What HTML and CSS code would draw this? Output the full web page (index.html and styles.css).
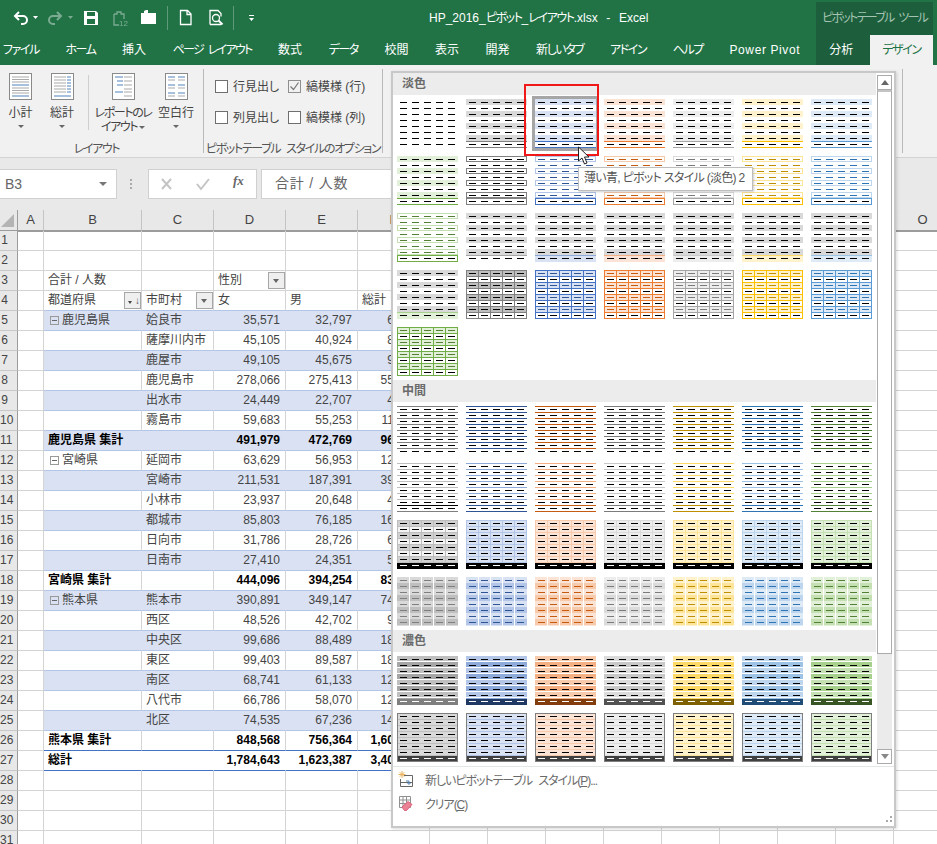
FILE: index.html
```html
<!DOCTYPE html>
<html lang="ja">
<head>
    <meta charset="utf-8">
    <title>HP_2016_ピボット_レイアウト.xlsx - Excel</title>
    <link rel="stylesheet" href="styles.css">
</head>
<body>
    <!-- Title bar -->
    <div class="titlebar">
        <svg class="qat" width="429" height="33" viewBox="0 0 429 33">
            <path class="st" d="M19 12l-4 4 4 4M15 16h8a4 4 0 0 1 0 8h-2"/>
            <path class="tri" d="M33 16h5l-2.500 3z"/>
            <g class="dim">
                <path class="st" d="M57 12l4 4-4 4M61 16h-8a4 4 0 0 0 0 8h2"/>
                <path class="tri" d="M68 16h5l-2.500 3z"/>
            </g>
            <path class="solid" d="M84 11h12l2 2v12H84z"/>
            <path class="cut" d="M87 12h8v4h-8zM87 19h8v5h-8z"/>
            <g class="dim">
                <path class="thin" d="M114 14h3v-2h4v2h3v5M114 14v11h5"/>
                <text class="n12" x="119" y="26">12</text>
            </g>
            <path class="solid" d="M141 13h3v-2l2-1h2v3h8v11h-15z"/>
            <line class="sep" x1="167.500" y1="6" x2="167.500" y2="30"/>
            <path class="thin" d="M180.500 10.500h7l3.500 3.500v10.500h-10.500zM187 10.500v4h4"/>
            <path class="thin" d="M210 24.500v-14h8l3 3v3M210 24.500h11"/>
            <circle class="thin" cx="216" cy="18" r="3.500"/>
            <path class="st" d="M218.500 20.500l4 4"/>
            <line class="sep" x1="233.500" y1="6" x2="233.500" y2="30"/>
            <path class="solid" d="M249 15h5v1h-5zM249 18h5l-2.500 3z"/>
        </svg>
        <div class="doc-title">HP_2016_<span class="kana">ピボット</span>_<span class="kana">レイアウト</span>.xlsx &nbsp;-&nbsp; Excel</div>
        <div class="ctx-title">ピボットテーブル ツール</div>
    </div>

    <!-- Ribbon tabs -->
    <div class="tabs">
        <span class="tab kana">ファイル</span>
        <span class="tab kana">ホーム</span>
        <span class="tab">挿入</span>
        <span class="tab spaced">ページ レイアウト</span>
        <span class="tab">数式</span>
        <span class="tab kana">データ</span>
        <span class="tab">校閲</span>
        <span class="tab">表示</span>
        <span class="tab">開発</span>
        <span class="tab kana">新しいタブ</span>
        <span class="tab kana">アドイン</span>
        <span class="tab kana">ヘルプ</span>
        <span class="tab latin">Power Pivot</span>
        <div class="ctx-tabs">
            <span class="tab ctx-tab">分析</span>
            <span class="tab active-tab kana">デザイン</span>
        </div>
    </div>

    <!-- Ribbon -->
    <div class="ribbon">
        <div class="group group-layout">
            <div class="group-body">
                <div class="bigbtn w41">
                    <svg class="ricon" width="23" height="27" viewBox="0 0 23 27">
                        <rect class="frame" x=".5" y=".5" width="22" height="26"/>
                        <path class="g" d="M3 4h17M3 6.500h17M3 9h17"/>
                        <path class="b" d="M3 12h17"/>
                        <path class="g" d="M3 15h17M3 17.500h17M3 20h17"/>
                        <path class="b" d="M3 23h17"/>
                    </svg>
                    <span class="biglabel">小計</span>
                    <span class="caret"></span>
                </div>
                <div class="bigbtn w42">
                    <svg class="ricon" width="23" height="27" viewBox="0 0 23 27">
                        <rect class="frame" x=".5" y=".5" width="22" height="26"/>
                        <path class="g" d="M3 4h12M3 7h12M3 10h12M3 13h12M3 16h12M3 19h12"/>
                        <path class="b" d="M16 4h4M16 7h4M16 10h4M16 13h4M16 16h4M16 19h4M3 23h17"/>
                    </svg>
                    <span class="biglabel">総計</span>
                    <span class="caret"></span>
                </div>
                <div class="vsep"></div>
                <div class="bigbtn w60">
                    <svg class="ricon" width="23" height="27" viewBox="0 0 23 27">
                        <rect class="frame" x=".5" y=".5" width="22" height="26"/>
                        <path class="b" d="M3 4h8M5 8h6M5 12h6M3 19h8"/>
                        <path class="g" d="M12 4h8M12 8h8M12 12h8M12 16h8M12 19h8M12 23h8"/>
                    </svg>
                    <span class="biglabel kana">レポートのレ<br>イアウト <i class="caret inline"></i></span>
                </div>
                <div class="bigbtn w46">
                    <svg class="ricon" width="23" height="27" viewBox="0 0 23 27">
                        <rect class="frame" x=".5" y=".5" width="22" height="26"/>
                        <path class="b" d="M3 4h7M13 4h7M3 12h7M13 12h7M3 20h7M13 20h7"/>
                        <path class="g" d="M3 7h7M13 7h7M3 15h7M13 15h7M3 23h7M13 23h7"/>
                    </svg>
                    <span class="biglabel">空白行</span>
                    <span class="caret"></span>
                </div>
            </div>
            <div class="group-label kana">レイアウト</div>
        </div>
        <div class="group group-options">
            <div class="checks">
                <label class="check"><span class="box"></span>行見出し</label>
                <label class="check"><span class="box checked">
                    <svg width="11" height="11" viewBox="0 0 11 11"><path d="M1.500 5.500l3 3 5-7"/></svg>
                </span>縞模様 (行)</label>
                <label class="check"><span class="box"></span>列見出し</label>
                <label class="check"><span class="box"></span>縞模様 (列)</label>
            </div>
            <div class="group-label">ピボットテーブル スタイルのオプション</div>
        </div>
        <div class="group group-styles"></div>
    </div>

    <!-- Formula bar -->
    <div class="formula">
        <div class="namebox"><span>B3</span><span class="nb-arrow"></span></div>
        <div class="dots"></div>
        <div class="fx-buttons">
            <svg width="109" height="28" viewBox="0 0 109 28">
                <path class="fx-x" d="M13 9l9 10M22 9l-9 10"/>
                <path class="fx-ok" d="M48 14l4 5 8-10"/>
            </svg>
            <span class="fx-label">fx</span>
        </div>
        <div class="fx-input">合計 / 人数</div>
    </div>

    <!-- Sheet -->
    <div class="sheet">
        <div class="row head">
            <span class="num corner"><svg width="17" height="20" viewBox="0 0 17 20"><path d="M14 4v13H1z"/></svg></span>
            <span class="colh">A</span><span class="colh">B</span><span class="colh">C</span><span class="colh">D</span><span class="colh">E</span><span class="colh">F</span>
            <span class="colh-rest">
                <span class="colh">G</span><span class="colh">H</span><span class="colh">I</span><span class="colh">J</span><span class="colh">K</span><span class="colh">L</span><span class="colh">M</span><span class="colh">N</span><span class="colh">O</span>
            </span>
        </div>
        <div class="row"><span class="num">1</span><span class="cell"></span><span class="cell"></span><span class="cell"></span><span class="cell"></span><span class="cell"></span><span class="cell"></span><span class="rest"></span></div>
        <div class="row"><span class="num">2</span><span class="cell"></span><span class="cell"></span><span class="cell"></span><span class="cell"></span><span class="cell"></span><span class="cell"></span><span class="rest"></span></div>
        <div class="row"><span class="num">3</span><span class="cell"></span><span class="cell">合計 / 人数</span><span class="cell"></span><span class="cell split">性別<span class="drop"></span></span><span class="cell"></span><span class="cell"></span><span class="rest"></span></div>
        <div class="row hdr"><span class="num">4</span><span class="cell"></span><span class="cell p split">都道府県<span class="drop sorted">↓</span></span><span class="cell p split">市町村<span class="drop"></span></span><span class="cell p">女</span><span class="cell p">男</span><span class="cell p">総計</span><span class="rest"></span></div>
        <div class="row band"><span class="num">5</span><span class="cell"></span><span class="cell p"><i class="minus"></i>鹿児島県</span><span class="cell p">姶良市</span><span class="cell p v">35,571</span><span class="cell p v">32,797</span><span class="cell p v">68,368</span><span class="rest"></span></div>
        <div class="row"><span class="num">6</span><span class="cell"></span><span class="cell p"></span><span class="cell p">薩摩川内市</span><span class="cell p v">45,105</span><span class="cell p v">40,924</span><span class="cell p v">86,029</span><span class="rest"></span></div>
        <div class="row band"><span class="num">7</span><span class="cell"></span><span class="cell p"></span><span class="cell p">鹿屋市</span><span class="cell p v">49,105</span><span class="cell p v">45,675</span><span class="cell p v">94,780</span><span class="rest"></span></div>
        <div class="row"><span class="num">8</span><span class="cell"></span><span class="cell p"></span><span class="cell p">鹿児島市</span><span class="cell p v">278,066</span><span class="cell p v">275,413</span><span class="cell p v">553,479</span><span class="rest"></span></div>
        <div class="row band"><span class="num">9</span><span class="cell"></span><span class="cell p"></span><span class="cell p">出水市</span><span class="cell p v">24,449</span><span class="cell p v">22,707</span><span class="cell p v">47,156</span><span class="rest"></span></div>
        <div class="row"><span class="num">10</span><span class="cell"></span><span class="cell p"></span><span class="cell p">霧島市</span><span class="cell p v">59,683</span><span class="cell p v">55,253</span><span class="cell p v">114,936</span><span class="rest"></span></div>
        <div class="row band total"><span class="num">11</span><span class="cell"></span><span class="cell p">鹿児島県 集計</span><span class="cell p"></span><span class="cell p v">491,979</span><span class="cell p v">472,769</span><span class="cell p v">964,748</span><span class="rest"></span></div>
        <div class="row"><span class="num">12</span><span class="cell"></span><span class="cell p"><i class="minus"></i>宮崎県</span><span class="cell p">延岡市</span><span class="cell p v">63,629</span><span class="cell p v">56,953</span><span class="cell p v">120,582</span><span class="rest"></span></div>
        <div class="row band"><span class="num">13</span><span class="cell"></span><span class="cell p"></span><span class="cell p">宮崎市</span><span class="cell p v">211,531</span><span class="cell p v">187,391</span><span class="cell p v">398,922</span><span class="rest"></span></div>
        <div class="row"><span class="num">14</span><span class="cell"></span><span class="cell p"></span><span class="cell p">小林市</span><span class="cell p v">23,937</span><span class="cell p v">20,648</span><span class="cell p v">44,585</span><span class="rest"></span></div>
        <div class="row band"><span class="num">15</span><span class="cell"></span><span class="cell p"></span><span class="cell p">都城市</span><span class="cell p v">85,803</span><span class="cell p v">76,185</span><span class="cell p v">161,988</span><span class="rest"></span></div>
        <div class="row"><span class="num">16</span><span class="cell"></span><span class="cell p"></span><span class="cell p">日向市</span><span class="cell p v">31,786</span><span class="cell p v">28,726</span><span class="cell p v">60,512</span><span class="rest"></span></div>
        <div class="row band"><span class="num">17</span><span class="cell"></span><span class="cell p"></span><span class="cell p">日南市</span><span class="cell p v">27,410</span><span class="cell p v">24,351</span><span class="cell p v">51,761</span><span class="rest"></span></div>
        <div class="row total"><span class="num">18</span><span class="cell"></span><span class="cell p">宮崎県 集計</span><span class="cell p"></span><span class="cell p v">444,096</span><span class="cell p v">394,254</span><span class="cell p v">838,350</span><span class="rest"></span></div>
        <div class="row band"><span class="num">19</span><span class="cell"></span><span class="cell p"><i class="minus"></i>熊本県</span><span class="cell p">熊本市</span><span class="cell p v">390,891</span><span class="cell p v">349,147</span><span class="cell p v">740,038</span><span class="rest"></span></div>
        <div class="row"><span class="num">20</span><span class="cell"></span><span class="cell p"></span><span class="cell p">西区</span><span class="cell p v">48,526</span><span class="cell p v">42,702</span><span class="cell p v">91,228</span><span class="rest"></span></div>
        <div class="row band"><span class="num">21</span><span class="cell"></span><span class="cell p"></span><span class="cell p">中央区</span><span class="cell p v">99,686</span><span class="cell p v">88,489</span><span class="cell p v">188,175</span><span class="rest"></span></div>
        <div class="row"><span class="num">22</span><span class="cell"></span><span class="cell p"></span><span class="cell p">東区</span><span class="cell p v">99,403</span><span class="cell p v">89,587</span><span class="cell p v">188,990</span><span class="rest"></span></div>
        <div class="row band"><span class="num">23</span><span class="cell"></span><span class="cell p"></span><span class="cell p">南区</span><span class="cell p v">68,741</span><span class="cell p v">61,133</span><span class="cell p v">129,874</span><span class="rest"></span></div>
        <div class="row"><span class="num">24</span><span class="cell"></span><span class="cell p"></span><span class="cell p">八代市</span><span class="cell p v">66,786</span><span class="cell p v">58,070</span><span class="cell p v">124,856</span><span class="rest"></span></div>
        <div class="row band"><span class="num">25</span><span class="cell"></span><span class="cell p"></span><span class="cell p">北区</span><span class="cell p v">74,535</span><span class="cell p v">67,236</span><span class="cell p v">141,771</span><span class="rest"></span></div>
        <div class="row total pre-grand"><span class="num">26</span><span class="cell"></span><span class="cell p">熊本県 集計</span><span class="cell p"></span><span class="cell p v">848,568</span><span class="cell p v">756,364</span><span class="cell p v">1,604,932</span><span class="rest"></span></div>
        <div class="row total grand"><span class="num">27</span><span class="cell"></span><span class="cell p">総計</span><span class="cell p"></span><span class="cell p v">1,784,643</span><span class="cell p v">1,623,387</span><span class="cell p v">3,408,030</span><span class="rest"></span></div>
        <div class="row"><span class="num">28</span><span class="cell"></span><span class="cell"></span><span class="cell"></span><span class="cell"></span><span class="cell"></span><span class="cell"></span><span class="rest"></span></div>
        <div class="row"><span class="num">29</span><span class="cell"></span><span class="cell"></span><span class="cell"></span><span class="cell"></span><span class="cell"></span><span class="cell"></span><span class="rest"></span></div>
        <div class="row"><span class="num">30</span><span class="cell"></span><span class="cell"></span><span class="cell"></span><span class="cell"></span><span class="cell"></span><span class="cell"></span><span class="rest"></span></div>
        <div class="row"><span class="num">31</span><span class="cell"></span><span class="cell"></span><span class="cell"></span><span class="cell"></span><span class="cell"></span><span class="cell"></span><span class="rest"></span></div>
    </div>

    <!-- Style gallery dropdown -->
    <div class="panel">
        <div class="panel-main">
            <div class="gallery">
                <div class="section">淡色</div>
                <div class="thumbs">
                    <div class="thumb"></div>
                    <div class="thumb band black"></div>
                    <div class="thumb band blue selected"></div>
                    <div class="thumb band orange"></div>
                    <div class="thumb band gray"></div>
                    <div class="thumb band gold"></div>
                    <div class="thumb band sky"></div>

                    <div class="thumb band green"></div>
                    <div class="thumb outlined black"></div>
                    <div class="thumb outlined blue"></div>
                    <div class="thumb outlined orange"></div>
                    <div class="thumb outlined gray"></div>
                    <div class="thumb outlined gold"></div>
                    <div class="thumb outlined sky"></div>

                    <div class="thumb outlined green"></div>
                    <div class="thumb stripe black"></div>
                    <div class="thumb stripe blue"></div>
                    <div class="thumb stripe orange"></div>
                    <div class="thumb stripe gray"></div>
                    <div class="thumb stripe gold"></div>
                    <div class="thumb stripe sky"></div>

                    <div class="thumb stripe green"></div>
                    <div class="thumb grid black"></div>
                    <div class="thumb grid blue"></div>
                    <div class="thumb grid orange"></div>
                    <div class="thumb grid gray"></div>
                    <div class="thumb grid gold"></div>
                    <div class="thumb grid sky"></div>

                    <div class="thumb grid green"></div>
                </div>
                <div class="section">中間</div>
                <div class="thumbs">
                    <div class="thumb rule black"></div>
                    <div class="thumb rule blue"></div>
                    <div class="thumb rule orange"></div>
                    <div class="thumb rule gray"></div>
                    <div class="thumb rule gold"></div>
                    <div class="thumb rule sky"></div>
                    <div class="thumb rule green"></div>

                    <div class="thumb rule2 black"></div>
                    <div class="thumb rule2 blue"></div>
                    <div class="thumb rule2 orange"></div>
                    <div class="thumb rule2 gray"></div>
                    <div class="thumb rule2 gold"></div>
                    <div class="thumb rule2 sky"></div>
                    <div class="thumb rule2 green"></div>

                    <div class="thumb medgrid black"></div>
                    <div class="thumb medgrid blue"></div>
                    <div class="thumb medgrid orange"></div>
                    <div class="thumb medgrid gray"></div>
                    <div class="thumb medgrid gold"></div>
                    <div class="thumb medgrid sky"></div>
                    <div class="thumb medgrid green"></div>

                    <div class="thumb medband black"></div>
                    <div class="thumb medband blue"></div>
                    <div class="thumb medband orange"></div>
                    <div class="thumb medband gray"></div>
                    <div class="thumb medband gold"></div>
                    <div class="thumb medband sky"></div>
                    <div class="thumb medband green"></div>
                </div>
                <div class="section">濃色</div>
                <div class="thumbs">
                    <div class="thumb darkband black"></div>
                    <div class="thumb darkband blue"></div>
                    <div class="thumb darkband orange"></div>
                    <div class="thumb darkband gray"></div>
                    <div class="thumb darkband gold"></div>
                    <div class="thumb darkband sky"></div>
                    <div class="thumb darkband green"></div>

                    <div class="thumb darkbox black"></div>
                    <div class="thumb darkbox blue"></div>
                    <div class="thumb darkbox orange"></div>
                    <div class="thumb darkbox gray"></div>
                    <div class="thumb darkbox gold"></div>
                    <div class="thumb darkbox sky"></div>
                    <div class="thumb darkbox green"></div>
                </div>
            </div>
            <div class="scroll">
                <div class="sb-btn sb-up"></div>
                <div class="sb-thumb"></div>
                <div class="sb-track"></div>
                <div class="sb-btn sb-down"></div>
            </div>
        </div>
        <div class="panel-menu">
            <div class="menu-item">
                <svg width="16" height="18" viewBox="0 0 16 18">
                    <path class="spark" d="M4 1v7M.5 4.500h7M1.800 2.300l4.400 4.400M6.200 2.300L1.800 6.700"/>
                    <path class="tbl" d="M6 5.500h8.500v11H2.500V9M2.500 12.500h12"/>
                    <path class="arr" d="M8 11h3M11 11v3M9.500 13l1.500 1.500L12.500 13"/>
                </svg>
                <span class="menu-text">新しいピボットテーブル スタイル(<u>P</u>)...</span>
            </div>
            <div class="menu-item">
                <svg width="16" height="18" viewBox="0 0 16 18">
                    <path class="tbl2" d="M1.500 2.500h11v11h-11zM1.500 6h11M1.500 9.500h11M5 2.500v11M8.500 2.500v11"/>
                    <path class="eraser" d="M4 13l6-5.500 4 3-5.500 6h-2z"/>
                </svg>
                <span class="menu-text">クリア(<u>C</u>)</span>
            </div>
            <div class="grip"></div>
        </div>
    </div>

    <!-- Things on top of the gallery -->
    <div class="redbox"></div>
    <svg class="cursor" width="14" height="20" viewBox="0 0 14 20">
        <path d="M1.500 1v14l3.500-3 2.500 6 2.500-1-2.500-6h4.500z"/>
    </svg>
    <div class="tooltip">薄い青, ピボット スタイル (淡色) 2</div>
</body>
</html>
```

FILE: styles.css
```css
* {
    box-sizing: border-box;
}

html, body {
    margin: 0;
    height: 844px;
    overflow: hidden;
}

body {
    position: relative;
    background-color: #fff;
    color: #444;
    font: 12px "Liberation Sans", "Noto Sans CJK JP", sans-serif;
    font-feature-settings: "palt";
}

/* Meiryo UI kana are narrower than Noto's, even with palt */
.kana {
    letter-spacing: -1.4px;
}

.spaced {
    letter-spacing: -1.7px;
    word-spacing: 3px;
}

.latin {
    letter-spacing: .6px;
}

/* Title bar */
.titlebar {
    display: flex;
    height: 33px;
    background-color: #217346;
    color: #fff;
}

.qat {
    flex: none;
}

.qat .st { fill: none; stroke: #fff; stroke-width: 2; }
.qat .thin { fill: none; stroke: #fff; stroke-width: 1.3; }
.qat .tri, .qat .solid { fill: #fff; }
.qat .cut { fill: #217346; }
.qat .sep { stroke: #5f9a7b; }
.qat .dim { opacity: .4; }
.qat .n12 { fill: #fff; font: 8px "Liberation Sans", sans-serif; }

.doc-title {
    flex: 1;
    padding-top: 9px;
    line-height: 18px;
    word-spacing: 1px;
    white-space: nowrap;
}

.ctx-title {
    flex: none;
    width: 117px;
    margin: 2px 4px 0 0;
    padding: 7px 0 0 6px;
    background-color: #1d5f3c;
    color: #a4c3b2;
    letter-spacing: -1.7px;
    word-spacing: 3px;
    line-height: 18px;
    white-space: nowrap;
}

/* Tabs */
.tabs {
    display: flex;
    height: 32px;
    background-color: #217346;
    color: #fff;
    overflow: hidden;
}

.tab {
    flex: none;
    padding: 8px 13.250px 0;
    line-height: 18px;
    white-space: nowrap;
}

.tab:first-child {
    margin-left: -10.250px;
}

.ctx-tabs {
    flex: none;
    display: flex;
    justify-content: space-between;
    width: 117px;
    margin-left: auto;
    margin-right: 4px;
    background-color: #1d5f3c;
}

.ctx-tabs .tab:first-child {
    margin-left: 0;
}

.active-tab {
    width: 63px;
    margin-top: 2px;
    padding: 6px 0 0;
    background-color: #f1f1f1;
    color: #217346;
    text-align: center;
}

/* Ribbon */
.ribbon {
    display: flex;
    height: 93px;
    background-color: #f1f1f1;
    border-bottom: 1px solid #d6d2d2;
}

.group {
    display: flex;
    flex-direction: column;
    margin: 4px 0;
    border-right: 1px solid #b9b9b9;
}

.group-layout { width: 204px; }
.group-options { width: 179px; }
.group-styles { width: 520px; }

.group-body {
    flex: none;
    display: flex;
    height: 73px;
    padding-top: 4px;
}

.group-label {
    flex: none;
    color: #555;
    line-height: 14px;
    text-align: center;
    white-space: nowrap;
}

.group-options .group-label {
    letter-spacing: -1.35px;
    word-spacing: 4px;
}

.group-layout .group-label {
    margin-right: 10px;
}

.bigbtn {
    display: flex;
    flex-direction: column;
    align-items: center;
}

.w41 { width: 41px; }
.w42 { width: 42px; }
.w46 { width: 46px; }
.w60 { width: 60px; }

.vsep {
    width: 1px;
    height: 55px;
    margin: 2px 4px 0 5px;
    background-color: #cfcfcf;
}

.ricon {
    flex: none;
    background-color: #fff;
}

.ricon .frame { fill: none; stroke: #8a8a8a; }
.ricon .g { fill: none; stroke: #a9a9a9; }
.ricon .b { fill: none; stroke: #4f81bd; }

.biglabel {
    margin-top: 6px;
    line-height: 14px;
    text-align: center;
    white-space: nowrap;
}

.caret {
    display: block;
    width: 0;
    height: 0;
    margin-top: 5px;
    border-left: 3px solid transparent;
    border-right: 3px solid transparent;
    border-top: 3px solid #666;
}

.caret.inline {
    display: inline-block;
    margin: 0 0 2px;
}

.checks {
    flex: none;
    display: grid;
    grid-template-columns: 73px auto;
    grid-auto-rows: 31px;
    height: 73px;
    padding: 11px 0 0 11px;
}

.check {
    display: flex;
    align-items: flex-start;
    gap: 5px;
    line-height: 14px;
    white-space: nowrap;
}

.box {
    flex: none;
    display: block;
    width: 13px;
    height: 13px;
    background-color: #fff;
    border: 1px solid #6f6f6f;
}

.box.checked {
    background-color: #f1f1f1;
    border-color: #8f8f8f;
}

.box svg {
    display: block;
    fill: none;
    stroke: #777;
    stroke-width: 1.2;
}

/* Formula bar */
.formula {
    display: flex;
    height: 52px;
    padding-top: 11px;
    background-color: #e9e9e9;
    font-size: 14px;
}

.namebox {
    display: flex;
    align-items: center;
    justify-content: space-between;
    width: 117px;
    height: 30px;
    padding: 0 9px 0 5px;
    background-color: #fff;
    border: 1px solid #d0d0d0;
    border-left: none;
    color: #666;
}

.nb-arrow {
    border-left: 4px solid transparent;
    border-right: 4px solid transparent;
    border-top: 4px solid #777;
}

.dots {
    width: 2px;
    height: 10px;
    margin: 10px 16px 0 13px;
    background: repeating-linear-gradient(#aaa 0 2px, transparent 2px 4px);
}

.fx-buttons {
    position: relative;
    width: 109px;
    height: 30px;
    background-color: #fff;
    border: 1px solid #d0d0d0;
}

.fx-x, .fx-ok {
    fill: none;
    stroke: #c4c4c4;
    stroke-width: 2;
}

.fx-label {
    position: absolute;
    left: 84px;
    top: 3px;
    color: #666;
    font: italic bold 13px "Liberation Serif", serif;
}

.fx-input {
    width: 150px;
    height: 30px;
    margin-left: 4px;
    padding-left: 13px;
    background-color: #fff;
    border: 1px solid #d0d0d0;
    color: #666;
    letter-spacing: .8px;
    line-height: 26px;
    white-space: nowrap;
}

/* Sheet */
.row {
    display: grid;
    grid-template-columns: 18px 26px 98px 72px 72px 72px 72px 1fr;
    height: 20px;
    line-height: 19px;
}

.head {
    height: 21px;
    line-height: 20px;
    background-color: #e8e8e8;
}

.num {
    padding-right: 8px;
    background-color: #e8e8e8;
    border-right: 1px solid #9c9c9c;
    border-bottom: 1px solid #c8c8c8;
    color: #444;
    text-align: center;
    white-space: nowrap;
}

.corner {
    padding: 0;
    border-bottom: 2px solid #9c9c9c;
}

.corner svg {
    display: block;
    fill: #b4b4b4;
}

.colh {
    border-right: 1px solid #c4c4c4;
    border-bottom: 2px solid #9c9c9c;
    color: #444;
    font-size: 13px;
    text-align: center;
}

.colh-rest {
    display: grid;
    grid-template-columns: repeat(9, 58px);
}

.cell {
    padding: 0 4px;
    border-right: 1px solid #d4d4d4;
    border-bottom: 1px solid #d4d4d4;
    overflow: hidden;
    white-space: nowrap;
}

.rest {
    background: repeating-linear-gradient(to right, transparent 0 57px, #d4d4d4 57px 58px);
    border-bottom: 1px solid #d4d4d4;
}

.split {
    display: flex;
    justify-content: space-between;
    padding-right: 0;
}

.p {
    border-bottom-color: #b4c6e7;
}

.v {
    padding-right: 5px;
    text-align: right;
}

.band .p {
    background-color: #d9e1f2;
    border-right-color: #d9e1f2;
}

.total .p {
    color: #000;
    font-weight: bold;
}

.pre-grand .p {
    border-bottom-color: #4472c4;
}

.grand .p {
    border-right-color: #fff;
    border-bottom-color: #4472c4;
}

.minus {
    display: inline-block;
    position: relative;
    width: 9px;
    height: 9px;
    margin: 0 3px 0 2px;
    vertical-align: -1px;
    border: 1px solid #999;
}

.minus::after {
    content: "";
    position: absolute;
    left: 1px;
    right: 1px;
    top: 3px;
    height: 1px;
    background-color: #666;
}

.drop {
    position: relative;
    flex: none;
    width: 17px;
    height: 17px;
    margin-top: 1px;
    background-color: #efefef;
    border: 1px solid #a6a6a6;
    color: #555;
    font-size: 10px;
    line-height: 15px;
    text-align: right;
}

.drop:not(.sorted)::after {
    content: "";
    position: absolute;
    left: 4px;
    top: 6px;
    border-left: 3.500px solid transparent;
    border-right: 3.500px solid transparent;
    border-top: 4px solid #666;
}

.drop.sorted::after {
    content: "";
    position: absolute;
    left: 3px;
    top: 8px;
    border-left: 2px solid transparent;
    border-right: 2px solid transparent;
    border-top: 3px solid #444;
}

/* Dropdown */
.panel {
    position: absolute;
    left: 391px;
    top: 71px;
    width: 505px;
    height: 757px;
    background-color: #fff;
    border: 2px solid #c8c8c8;
    box-shadow: 1px 1px 3px rgba(0, 0, 0, .15);
}

.panel-main {
    display: flex;
    height: 693px;
}

.gallery {
    width: 484px;
}

.section {
    width: 483px;
    height: 22px;
    padding-left: 9px;
    background-color: #ececec;
    color: #6a6a6a;
    font-weight: bold;
    line-height: 22px;
}

.thumbs {
    display: grid;
    grid-template-columns: repeat(7, 61px);
    grid-auto-rows: 49px;
    gap: 8px;
    padding: 4px;
}

/* Palettes, lightest to darkest */
.black  { --l1: #d9d9d9; --l2: #bfbfbf; --l3: #a6a6a6; --m: #808080; --k: #7f7f7f; --x: #7f7f7f; }
.blue   { --l1: #d9e2f3; --l2: #b4c6e7; --l3: #8eaadb; --m: #4472c4; --k: #2f5597; --x: #1f3864; }
.orange { --l1: #fbe4d5; --l2: #f7caac; --l3: #f4b083; --m: #ed7d31; --k: #c55a11; --x: #833c0b; }
.gray   { --l1: #ededed; --l2: #dbdbdb; --l3: #c9c9c9; --m: #a5a5a5; --k: #7b7b7b; --x: #525252; }
.gold   { --l1: #fff2cc; --l2: #ffe599; --l3: #ffd966; --m: #ffc000; --k: #bf8f00; --x: #7f6000; }
.sky    { --l1: #deeaf6; --l2: #bdd6ee; --l3: #9cc2e5; --m: #5b9bd5; --k: #2e74b5; --x: #1f4d78; }
.green  { --l1: #e2efd9; --l2: #c5e0b3; --l3: #a8d08d; --m: #70ad47; --k: #538135; --x: #385623; }

.thumb {
    --d1: #000;
    --d2: #000;
    --dt: #000;
    position: relative;
    background-repeat: no-repeat;
}

/* the five columns of little dashes */
.thumb::after {
    content: "";
    position: absolute;
    top: 0;
    bottom: 0;
    left: 3px;
    right: 3px;
    background:
        linear-gradient(var(--dt), var(--dt)) 0 45px / 100% 1px no-repeat,
        linear-gradient(transparent 3px, var(--d1) 3px 4px, transparent 4px 9px, var(--d2) 9px 10px, transparent 10px) 0 0 / 100% 12px repeat-y;
    -webkit-mask: linear-gradient(to right, #000 7px, transparent 7px) 0 0 / 12px 100%;
    mask: linear-gradient(to right, #000 7px, transparent 7px) 0 0 / 12px 100%;
}

.thumb.selected {
    outline: 3px solid #a6a6a6;
}

.band {
    background:
        linear-gradient(var(--m), var(--m)) 0 48px / 100% 1px no-repeat,
        linear-gradient(var(--m), var(--m)) 0 42px / 100% 1px no-repeat,
        repeating-linear-gradient(var(--l1) 0 6px, transparent 6px 12px);
}

.outlined {
    --d1: var(--k);
    --d2: var(--k);
    background:
        linear-gradient(var(--m), var(--m)) 0 42px / 100% 1px no-repeat,
        linear-gradient(var(--m), var(--m)) 0 48px / 100% 1px no-repeat,
        linear-gradient(var(--m), var(--m)) 0 42px / 1px 7px no-repeat,
        linear-gradient(var(--m), var(--m)) 100% 42px / 1px 7px no-repeat,
        repeating-linear-gradient(var(--l2) 0 1px, transparent 1px 5px, var(--l2) 5px 6px, transparent 6px 12px) 0 0 / 100% 42px no-repeat,
        repeating-linear-gradient(var(--l2) 0 6px, transparent 6px 12px) 0 0 / 1px 42px no-repeat,
        repeating-linear-gradient(var(--l2) 0 6px, transparent 6px 12px) 100% 0 / 1px 42px no-repeat;
}

.outlined.black {
    --d1: #000;
    --d2: #000;
    --l2: #808080;
}

.stripe {
    background:
        linear-gradient(var(--l3), var(--l3)) 0 42px / 100% 1px no-repeat,
        linear-gradient(var(--l1), var(--l1)) 0 42px / 100% 7px no-repeat,
        repeating-linear-gradient(#d9d9d9 0 6px, transparent 6px 12px);
}

.stripe.black {
    --l1: #fff;
    --l3: #a6a6a6;
}

.grid {
    --d1: var(--k);
    background:
        repeating-linear-gradient(to right, var(--m) 0 1px, transparent 1px 12px),
        repeating-linear-gradient(var(--m) 0 1px, transparent 1px 6px),
        repeating-linear-gradient(var(--l1) 0 6px, transparent 6px 12px);
}

.grid.black {
    --d1: #000;
    --l1: #bfbfbf;
}

.rule {
    background: repeating-linear-gradient(var(--k) 0 1px, transparent 1px 6px) 0 0 / 100% 43px no-repeat;
}

.rule2 {
    --strong: var(--k);
    background:
        linear-gradient(var(--strong), var(--strong)) 0 42px / 100% 1px no-repeat,
        linear-gradient(var(--k), var(--k)) 0 48px / 100% 1px no-repeat,
        repeating-linear-gradient(var(--l3) 0 1px, transparent 1px 6px) 0 0 / 100% 42px no-repeat;
}

.rule2.black {
    --strong: #000;
    --l3: #bfbfbf;
}

.medgrid {
    --dt: #fff;
    --alt: transparent;
    background:
        linear-gradient(#000, #000) 0 43px / 100% 6px no-repeat,
        repeating-linear-gradient(to right, var(--l2) 0 1px, transparent 1px 12px),
        repeating-linear-gradient(var(--l2) 0 1px, transparent 1px 6px),
        repeating-linear-gradient(var(--l1) 0 6px, var(--alt) 6px 12px),
        linear-gradient(var(--l1), var(--l1));
}

.medgrid.black {
    --l1: #d0d0d0;
    --l2: #bdbdbd;
    --alt: #f4f4f4;
}

.medband {
    --d1: var(--k);
    --d2: var(--k);
    --dt: var(--k);
    background:
        repeating-linear-gradient(to right, transparent 0 11px, #fff 11px 12px) 1px 0 / 59px 100% no-repeat,
        repeating-linear-gradient(var(--l1) 0 6px, var(--l2) 6px 12px);
}

.darkband {
    --dt: #fff;
    background:
        linear-gradient(var(--x), var(--x)) 0 43px / 100% 6px no-repeat,
        repeating-linear-gradient(var(--l2) 0 5px, #fff 5px 6px, var(--l3) 6px 11px, #fff 11px 12px);
}

.darkbox {
    --dt: #fff;
    background:
        linear-gradient(#404040, #404040) 0 43px / 100% 6px no-repeat,
        repeating-linear-gradient(var(--l2) 0 1px, transparent 1px 6px),
        linear-gradient(var(--l1), var(--l1));
    box-shadow: inset 0 0 0 1px #7f7f7f;
}

/* Gallery scroll bar */
.scroll {
    display: flex;
    flex-direction: column;
    width: 15px;
    padding-top: 2px;
}

.sb-btn {
    position: relative;
    height: 15px;
    background-color: #fff;
    border: 1px solid #ababab;
}

.sb-btn::after {
    content: "";
    position: absolute;
    left: 3px;
    top: 4px;
    border-left: 4px solid transparent;
    border-right: 4px solid transparent;
}

.sb-up::after { border-bottom: 5px solid #666; }
.sb-down::after { border-top: 5px solid #888; }

.sb-thumb {
    height: 564px;
    background-color: #fff;
    border: 1px solid #ababab;
    border-top: 2px solid #c4c4c4;
}

.sb-track {
    height: 95px;
    background-color: #ebebeb;
}

/* Menu under the gallery */
.panel-menu {
    position: relative;
    height: 60px;
    border-top: 1px solid #e2e6e6;
    color: #6a6a6a;
}

.menu-item {
    display: flex;
    align-items: center;
    gap: 11px;
    height: 24px;
    padding-left: 5px;
    white-space: nowrap;
}

.menu-text {
    letter-spacing: -1.05px;
    word-spacing: 4px;
}

.menu-item svg {
    fill: none;
    flex: none;
}

.spark { stroke: #e8b35a; }
.tbl { stroke: #666; }
.arr { stroke: #4f81bd; }
.tbl2 { stroke: #909090; }
.eraser { fill: #ea8296; stroke: #e0607a; }

.grip {
    position: absolute;
    right: 2px;
    bottom: 4px;
    width: 6px;
    height: 6px;
    background:
        linear-gradient(#aaa, #aaa) 4px 0 / 2px 2px no-repeat,
        linear-gradient(#aaa, #aaa) 4px 4px / 2px 2px no-repeat,
        linear-gradient(#aaa, #aaa) 0 4px / 2px 2px no-repeat;
}

/* Overlays */
.redbox {
    position: absolute;
    left: 524px;
    top: 84px;
    width: 75px;
    height: 72px;
    border: 2px solid #f01818;
}

.cursor {
    position: absolute;
    left: 577px;
    top: 146px;
}

.cursor path {
    fill: #fff;
    stroke: #222;
}

.tooltip {
    position: absolute;
    left: 578px;
    top: 167px;
    width: 175px;
    height: 24px;
    padding-left: 5px;
    background-color: #fff;
    border: 1px solid #bebebe;
    box-shadow: 1px 1px 2px rgba(0, 0, 0, .2);
    color: #555;
    letter-spacing: -.7px;
    line-height: 21px;
    white-space: nowrap;
}
```
